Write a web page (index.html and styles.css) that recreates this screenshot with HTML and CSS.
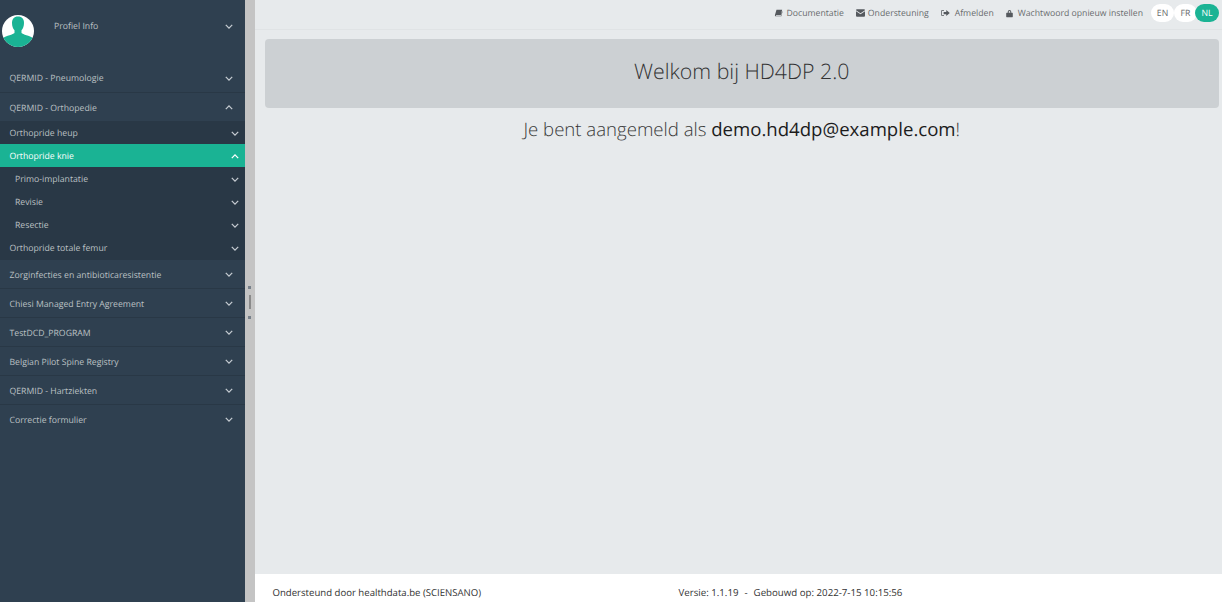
FILE: index.html
```html
<!DOCTYPE html>
<html>
	<head>
		<meta charset="UTF-8">
		<title>HD4DP 2.0</title>
		<link rel="stylesheet" href="styles.css">
	</head>
	<body>
		<div class="layout">
			<div class="sidebar">
				<div class="profile">
					<svg class="avatar" viewBox="0 0 32 32">
						<defs><clipPath id="round"><circle cx="16" cy="16" r="16"/></clipPath></defs>
						<circle cx="16" cy="16" r="16" fill="#fff"/>
						<g clip-path="url(#round)" fill="#1ab394">
							<path d="M16 1.500c-4 0-6 2.700-6 6.400 0 2.900 1 5.800 2.500 7.400v2.800c-1.500 1.500-7.500 2.600-12.500 5.400V32h32v-8.600c-5-2.800-11-3.900-12.500-5.400v-2.700c1.500-1.600 2.500-4.500 2.500-7.400 0-3.700-2-6.400-6-6.400z"/>
						</g>
					</svg>
					<span class="profile-name">Profiel Info</span>
					<svg class="chev" viewBox="0 0 10 6"><path d="M1 1l4 4 4-4"/></svg>
				</div>
				<ul class="menu">
					<li class="item">QERMID - Pneumologie<svg class="chev" viewBox="0 0 10 6"><path d="M1 1l4 4 4-4"/></svg></li>
					<li class="item">QERMID - Orthopedie<svg class="chev" viewBox="0 0 10 6"><path d="M1 5l4-4 4 4"/></svg></li>
					<li>
						<ul class="sub">
							<li class="sub-item">Orthopride heup<svg class="chev" viewBox="0 0 10 6"><path d="M1 1l4 4 4-4"/></svg></li>
							<li class="sub-item active">Orthopride knie<svg class="chev" viewBox="0 0 10 6"><path d="M1 5l4-4 4 4"/></svg></li>
							<li class="sub-item deep">Primo-implantatie<svg class="chev" viewBox="0 0 10 6"><path d="M1 1l4 4 4-4"/></svg></li>
							<li class="sub-item deep">Revisie<svg class="chev" viewBox="0 0 10 6"><path d="M1 1l4 4 4-4"/></svg></li>
							<li class="sub-item deep">Resectie<svg class="chev" viewBox="0 0 10 6"><path d="M1 1l4 4 4-4"/></svg></li>
							<li class="sub-item">Orthopride totale femur<svg class="chev" viewBox="0 0 10 6"><path d="M1 1l4 4 4-4"/></svg></li>
						</ul>
					</li>
					<li class="item">Zorginfecties en antibioticaresistentie<svg class="chev" viewBox="0 0 10 6"><path d="M1 1l4 4 4-4"/></svg></li>
					<li class="item">Chiesi Managed Entry Agreement<svg class="chev" viewBox="0 0 10 6"><path d="M1 1l4 4 4-4"/></svg></li>
					<li class="item">TestDCD_PROGRAM<svg class="chev" viewBox="0 0 10 6"><path d="M1 1l4 4 4-4"/></svg></li>
					<li class="item">Belgian Pilot Spine Registry<svg class="chev" viewBox="0 0 10 6"><path d="M1 1l4 4 4-4"/></svg></li>
					<li class="item">QERMID - Hartziekten<svg class="chev" viewBox="0 0 10 6"><path d="M1 1l4 4 4-4"/></svg></li>
					<li class="item">Correctie formulier<svg class="chev" viewBox="0 0 10 6"><path d="M1 1l4 4 4-4"/></svg></li>
				</ul>
			</div>
			<div class="splitter">
				<span class="dot"></span>
				<span class="grip"></span>
				<span class="dot"></span>
			</div>
			<div class="main">
				<div class="topbar">
					<a class="toplink link-doc">
						<svg class="ico" viewBox="0 0 12 12"><path d="M3 1h8.500L9.500 9H2.600c-.7 0-.8 1 0 1h7.200l1.500-6.500.7.500L10.300 11H2C.8 11 .4 10 .7 9z"/></svg>
						Documentatie
					</a>
					<a class="toplink link-help">
						<svg class="ico" viewBox="0 0 12 10"><path d="M0 1.200C0 .5.500 0 1.200 0h9.600c.7 0 1.200.5 1.200 1.200L6 5.200zM0 2.800l6 4 6-4v6c0 .7-.5 1.200-1.200 1.200H1.200C.5 10 0 9.500 0 8.800z"/></svg>
						Ondersteuning
					</a>
					<a class="toplink link-out">
						<svg class="ico" viewBox="0 0 12 10"><path d="M4 1H1.500C.7 1 .3 1.500.3 2.200v5.600C.3 8.500.7 9 1.500 9H4V8H1.800c-.3 0-.5-.2-.5-.5v-5c0-.3.2-.5.500-.5H4zM7 1v2.500H3.500v3H7V9l4.700-4z"/></svg>
						Afmelden
					</a>
					<a class="toplink link-pass">
						<svg class="ico ico-lock" viewBox="0 0 10 12"><path d="M2.500 5V3.500a2.500 2.500 0 015 0V5H9c.4 0 .7.3.7.7v5c0 .4-.3.7-.7.7H1c-.4 0-.7-.3-.7-.7v-5c0-.4.3-.7.7-.7zm1.400 0h2.200V3.500a1.100 1.100 0 00-2.200 0z"/></svg>
						Wachtwoord opnieuw instellen
					</a>
					<div class="langs">
						<span class="lang">EN</span>
						<span class="lang">FR</span>
						<span class="lang selected">NL</span>
					</div>
				</div>
				<div class="content">
					<div class="welcome">Welkom bij HD4DP 2.0</div>
					<p class="logged">Je bent aangemeld als <b>demo.hd4dp@example.com</b>!</p>
				</div>
				<div class="footer">
					<span class="support">Ondersteund door healthdata.be (SCIENSANO)</span>
					<span class="version">Versie: 1.1.19<span class="sep">-</span>Gebouwd op: 2022-7-15 10:15:56</span>
				</div>
			</div>
		</div>
	</body>
</html>
```

FILE: styles.css
```css
*{
	margin: 0;
	padding: 0;
	box-sizing: border-box;
}
html,body{
	height: 100%;
	overflow: hidden;
}
body{
	font-family: "Open Sans", "Liberation Sans", sans-serif;
	font-size: 8.7px;
	color: #676a6c;
	text-rendering: geometricPrecision;
}
li{
	list-style: none;
}
.layout{
	display: flex;
	height: 100%;
}
.sidebar{
	width: 244.5px;
	flex: none;
	background: #2f4050;
	color: #bcc0c4;
}
.profile{
	height: 63px;
	padding: 15px 11.5px 0 2px;
	display: flex;
	align-items: flex-start;
}
.avatar{
	width: 32px;
	height: 32px;
	flex: none;
}
.profile-name{
	margin-left: 20px;
	margin-top: 5px;
	flex: 1;
}
.profile .chev{
	margin-top: 9px;
}
.chev{
	width: 8px;
	height: 5px;
	flex: none;
	margin-left: auto;
	fill: none;
	stroke: #c6ccd2;
	stroke-width: 1.6;
}
.item{
	height: 29px;
	padding: 1px 11.5px 0 9.5px;
	display: flex;
	align-items: center;
	border-top: 1px solid #293846;
}
.item:first-child{
	border-top: none;
}
.sub{
	background: #293846;
}
.sub-item{
	height: 23px;
	padding: 1px 6px 0 9.5px;
	display: flex;
	align-items: center;
}
.sub-item.deep{
	padding-left: 15px;
}
.sub-item.active{
	background: #1ab394;
	color: #fff;
}
.sub-item.active .chev{
	stroke: #fff;
}
.splitter{
	width: 10px;
	flex: none;
	background: #c4c4c4;
	padding-top: 2px;
	display: flex;
	flex-direction: column;
	align-items: center;
	justify-content: center;
	gap: 6.5px;
}
.dot{
	width: 3px;
	height: 3px;
	background: #77808a;
}
.grip{
	width: 2px;
	height: 14px;
	background: #8a8a8a;
}
.main{
	flex: 1;
	display: flex;
	flex-direction: column;
	background: #e7eaec;
	min-width: 0;
}
.topbar{
	height: 30px;
	flex: none;
	padding: 0 3px 3px 0;
	display: flex;
	align-items: center;
	justify-content: flex-end;
	border-bottom: 1px solid #e0e3e5;
}
.toplink{
	display: flex;
	align-items: center;
	gap: 3px;
}
.link-doc{
	margin-right: 12px;
}
.link-help{
	margin-right: 12px;
}
.link-out{
	margin-right: 12px;
	gap: 5px;
}
.link-pass{
	margin-right: 8px;
	gap: 5px;
}
.ico{
	width: 9px;
	height: 8px;
	fill: #55595e;
}
.ico-lock{
	width: 7px;
	height: 9px;
}
.langs{
	display: flex;
}
.lang{
	width: 23px;
	height: 18px;
	line-height: 18px;
	text-align: center;
	background: #fff;
	border-radius: 9px;
}
.lang.selected{
	width: 24px;
	margin-left: -2px;
	background: #1ab394;
	color: #fff;
}
.content{
	flex: 1;
	padding: 9px 3px 0 10px;
	text-align: center;
}
.welcome{
	height: 69px;
	line-height: 66px;
	background: #ccd0d3;
	border-radius: 4px;
	font-size: 21.3px;
	font-weight: 300;
	color: #333;
}
.logged{
	margin-top: 6px;
	font-size: 18.6px;
	font-weight: 300;
	line-height: 32px;
	color: #3a3a3a;
}
.logged b{
	font-weight: 400;
	color: #1c1c1c;
}
.footer{
	height: 28px;
	flex: none;
	background: #fff;
	display: flex;
	align-items: center;
	padding: 8px 0 0 18px;
	font-size: 9.6px;
	color: #333;
}
.support{
	width: 406px;
}
.version{
	font-size: 9.7px;
}
.sep{
	margin: 0 6px;
}
```
